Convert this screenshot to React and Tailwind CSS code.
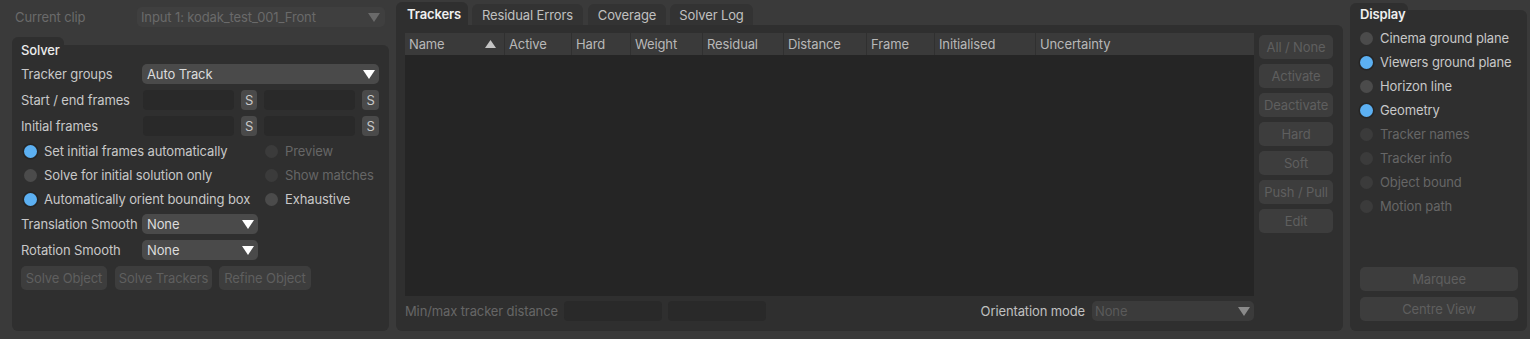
import React from "react";

const Arrow = ({ className }) => (
  <svg width="12" height="9" viewBox="0 0 12 9" className={className}>
    <path d="M0 0h12L6 9z" fill="currentColor" />
  </svg>
);

const Dropdown = ({ value, className }) => (
  <div className={`flex h-5 items-center justify-between rounded-[5px] bg-[#4a4a4a] pl-[5px] pr-[4px] text-[#dcdcdc] ${className}`}>
    <span>{value}</span>
    <Arrow className="text-white" />
  </div>
);

const Radio = ({ on, disabled, label }) => (
  <div className="flex h-6 items-center gap-[7px]">
    <span
      className={
        on
          ? "h-[13px] w-[13px] rounded-full bg-[#5cb0f2] ring-[1.5px] ring-[#252525]"
          : disabled
          ? "h-[13px] w-[13px] rounded-full bg-[#3b3b3b]"
          : "h-[13px] w-[13px] rounded-full bg-[#4b4b4b]"
      }
    />
    <span className={disabled ? "text-[#666666]" : "text-[#c8c8c8]"}>{label}</span>
  </div>
);

const Btn = ({ label, className }) => (
  <div className={`flex h-6 items-center justify-center rounded-[5px] bg-[#3d3d3d] text-[#5f5f5f] ${className}`}>
    {label}
  </div>
);

const FrameRow = ({ label }) => (
  <div className="flex h-5 items-center">
    <span className="w-[122px] text-[#c8c8c8]">{label}</span>
    <div className="flex flex-1 gap-[7px]">
      <div className="h-5 flex-1 rounded-[4px] bg-[#292929]" />
      <div className="flex h-5 w-4 items-center justify-center rounded-[4px] bg-[#4a4a4a] text-[#c8c8c8]">S</div>
      <div className="h-5 flex-1 rounded-[4px] bg-[#292929]" />
      <div className="flex h-5 w-[17px] items-center justify-center rounded-[4px] bg-[#4a4a4a] text-[#c8c8c8]">S</div>
    </div>
  </div>
);

const columns = [
  ["Name", 100],
  ["Active", 67],
  ["Hard", 59],
  ["Weight", 72],
  ["Residual", 81],
  ["Distance", 83],
  ["Frame", 68],
  ["Initialised", 101],
];

export default function App() {
  return (
    <div className="flex h-[339px] w-[1530px] overflow-hidden bg-[#3a3a3a] text-[13px] leading-4 tracking-[-0.12px] font-['Inter','Liberation_Sans',sans-serif]">
      {/* left column */}
      <div className="ml-[12px] flex w-[377px] flex-col">
        <div className="mt-[7px] flex h-5 items-center">
          <span className="ml-[3px] w-[122px] text-[#6a6a6a]">Current clip</span>
          <div className="flex h-5 w-[248px] items-center justify-between rounded-[5px] bg-[#3f3f3f] pl-[4px] pr-[5px] text-[#6a6a6a]">
            <span>Input 1: kodak_test_001_Front</span>
            <Arrow className="text-[#6a6a6a]" />
          </div>
        </div>
        <div className="mt-[10px] h-2 w-[52px] rounded-t-[6px] bg-[#2f2f2f]" />
        <div className="mb-[8px] flex flex-1 flex-col rounded-b-[6px] rounded-tr-[6px] bg-[#2f2f2f] pl-[9px] pr-[10px]">
          <div className="-mt-[3px] font-medium leading-4 text-[#ececec]">Solver</div>
          <div className="mt-[6px] flex flex-col gap-[6px]">
            <div className="flex h-5 items-center">
              <span className="w-[121px] text-[#c8c8c8]">Tracker groups</span>
              <Dropdown value="Auto Track" className="flex-1" />
            </div>
            <FrameRow label="Start / end frames" />
            <FrameRow label="Initial frames" />
          </div>
          <div className="mt-[3px] grid grid-cols-[241px_1fr] pl-[3px]">
            <Radio on label="Set initial frames automatically" />
            <Radio disabled label="Preview" />
            <Radio label="Solve for initial solution only" />
            <Radio disabled label="Show matches" />
            <Radio on label="Automatically orient bounding box" />
            <Radio label="Exhaustive" />
          </div>
          <div className="mt-[3px] flex flex-col gap-[6px]">
            <div className="flex h-5 items-center">
              <span className="w-[121px] text-[#c8c8c8]">Translation Smooth</span>
              <Dropdown value="None" className="w-[116px]" />
            </div>
            <div className="flex h-5 items-center">
              <span className="w-[121px] text-[#c8c8c8]">Rotation Smooth</span>
              <Dropdown value="None" className="w-[116px]" />
            </div>
          </div>
          <div className="mt-[6px] flex gap-[7px]">
            <Btn label="Solve Object" className="w-[86px]" />
            <Btn label="Solve Trackers" className="ml-px w-[97px]" />
            <Btn label="Refine Object" className="w-[92px]" />
          </div>
        </div>
      </div>

      {/* middle panel */}
      <div className="ml-[7px] flex w-[947px] flex-col">
        <div className="mt-[2px] flex h-[23px] items-end gap-[4px]">
          <div className="flex h-[23px] w-[72px] items-center rounded-t-[6px] bg-[#2f2f2f] pl-[11px] font-semibold text-[#f0f0f0]">
            Trackers
          </div>
          <div className="flex h-[21px] w-[111px] items-center justify-center rounded-t-[6px] bg-[#333333] text-[#c0c0c0]">
            Residual Errors
          </div>
          <div className="ml-px flex h-[21px] w-[78px] items-center justify-center rounded-t-[6px] bg-[#333333] text-[#c0c0c0]">
            Coverage
          </div>
          <div className="flex h-[21px] w-[83px] items-center justify-center rounded-t-[6px] bg-[#333333] text-[#c0c0c0]">
            Solver Log
          </div>
        </div>
        <div className="mb-[8px] flex flex-1 flex-col rounded-b-[6px] rounded-tr-[6px] bg-[#2f2f2f] pl-[9px] pr-[10px] pt-[8px]">
          <div className="flex flex-1 gap-[5px]">
            <div className="flex w-[850px] flex-col bg-[#252525]">
              <div className="flex h-[22px] items-center bg-[#3a3a3a] text-[#b8b8b8]">
                {columns.map(([name, w], i) => (
                  <div
                    key={name}
                    style={{ width: w }}
                    className="flex h-full items-center justify-between border-r border-[#303030] pl-[4px] pr-[8px]"
                  >
                    <span>{name}</span>
                    {i === 0 && (
                      <svg width="11" height="8" viewBox="0 0 11 8">
                        <path d="M0 8h11L5.5 0z" fill="#c4c4c4" />
                      </svg>
                    )}
                  </div>
                ))}
                <div className="pl-[4px]">Uncertainty</div>
              </div>
            </div>
            <div className="mt-[2px] flex w-[74px] flex-col gap-[5px]">
              <Btn label="All / None" />
              <Btn label="Activate" />
              <Btn label="Deactivate" />
              <Btn label="Hard" />
              <Btn label="Soft" />
              <Btn label="Push / Pull" />
              <Btn label="Edit" />
            </div>
          </div>
          <div className="mb-[10px] mt-[5px] flex h-5 items-center">
            <span className="text-[#666666]">Min/max tracker distance</span>
            <div className="ml-[6px] h-5 w-[98px] rounded-[4px] bg-[#292929]" />
            <div className="ml-[6px] h-5 w-[98px] rounded-[4px] bg-[#292929]" />
            <span className="ml-auto text-[#c0c0c0]">Orientation mode</span>
            <div className="ml-[7px] mr-[79px] flex h-5 w-[162px] items-center justify-between rounded-[5px] bg-[#3b3b3b] pl-[3px] pr-[4px] text-[#5a5a5a]">
              <span>None</span>
              <Arrow className="text-[#8a8a8a]" />
            </div>
          </div>
        </div>
      </div>

      {/* display panel */}
      <div className="ml-[7px] flex w-[177px] flex-col">
        <div className="mt-[3px] h-[7px] w-[58px] rounded-t-[6px] bg-[#2f2f2f]" />
        <div className="mb-[8px] flex flex-1 flex-col rounded-b-[6px] rounded-tr-[6px] bg-[#2f2f2f] pl-[10px] pr-[10px]">
          <div className="-mt-[4px] font-semibold leading-4 text-[#f0f0f0]">Display</div>
          <div className="mt-[4px] flex flex-col">
            <Radio label="Cinema ground plane" />
            <Radio on label="Viewers ground plane" />
            <Radio label="Horizon line" />
            <Radio on label="Geometry" />
            <Radio disabled label="Tracker names" />
            <Radio disabled label="Tracker info" />
            <Radio disabled label="Object bound" />
            <Radio disabled label="Motion path" />
          </div>
          <div className="mb-[10px] mt-auto flex flex-col gap-[6px]">
            <Btn label="Marquee" className="w-[158px]" />
            <Btn label="Centre View" className="w-[158px]" />
          </div>
        </div>
      </div>
    </div>
  );
}
